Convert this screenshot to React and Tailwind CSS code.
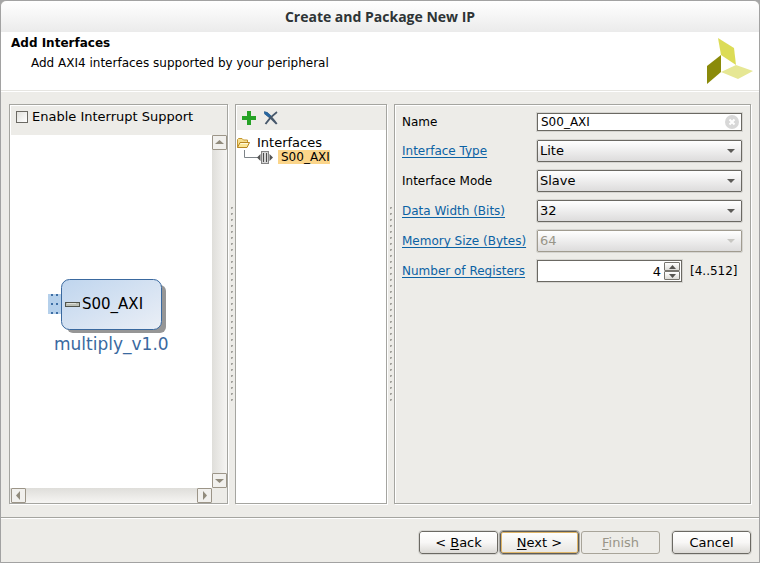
import React from 'react';

const etched = 'border border-[#a5a5a0] shadow-[1px_1px_0_#fff,inset_1px_1px_0_#fff]';

function Splitter() {
  return (
    <div role="separator" className="flex w-[7px] items-center justify-center pl-0.5" aria-orientation="vertical">
      <svg width="3" height="194" aria-hidden="true" shapeRendering="crispEdges">
        <defs>
          <pattern id="grip" width="3" height="6" patternUnits="userSpaceOnUse">
            <rect width="2" height="1" fill="#a3a29d" />
            <rect y="1" width="1" height="1" fill="#a3a29d" />
            <rect x="1" y="1" width="1" height="1" fill="#d0cfca" />
          </pattern>
        </defs>
        <rect width="3" height="194" fill="url(#grip)" />
      </svg>
    </div>
  );
}

function ScrollButton({ label, points }) {
  return (
    <button type="button" aria-label={label} className="flex h-[15px] w-[15px] shrink-0 items-center justify-center rounded-[1px] border border-[#9c9588] bg-[#f1f0ed]">
      <svg width="9" height="9" viewBox="0 0 9 9" aria-hidden="true">
        <polygon points={points} fill="#918b7c" />
      </svg>
    </button>
  );
}

function IpBlock() {
  return (
    <svg width="122" height="82" viewBox="0 0 122 82" role="img" aria-label="multiply_v1.0 block">
      <defs>
        <linearGradient id="block" x1="0" y1="0" x2="1" y2="1">
          <stop offset="0" stopColor="#bfd5ee" />
          <stop offset="1" stopColor="#ebeff6" />
        </linearGradient>
      </defs>
      <rect x="19" y="6" width="99" height="48" rx="6" fill="#969696" />
      <rect x="0" y="15" width="14" height="20" fill="#b5d0eb" />
      <path d="M3 15h2v2h-2zM8 15h2v2h-2zM3 24h2v2h-2zM8 24h2v2h-2zM3 33h2v2h-2zM8 33h2v2h-2z" fill="#3e6fa5" />
      <rect x="13.5" y="0.5" width="100" height="50" rx="8" fill="url(#block)" stroke="#3a699f" />
      <rect x="17.5" y="23.5" width="14" height="4" fill="#bdc0b6" stroke="#51544b" />
      <path d="M19 24.5h9" stroke="#dfe1da" />
      <text x="34" y="30" fontSize="15" fill="#000" className="font-['DejaVu_Sans',sans-serif]">S00_AXI</text>
      <text x="6" y="71" fontSize="17" fill="#3a699f" className="font-['DejaVu_Sans',sans-serif]">multiply_v1.0</text>
    </svg>
  );
}

function BlockPanel() {
  return (
    <section className={`flex w-[219px] shrink-0 flex-col ${etched}`}>
      <label className="flex h-[30px] items-center gap-1 pb-1.5 pl-1.5">
        <input type="checkbox" className="h-3 w-3 appearance-none border border-[#6b6963] bg-linear-to-br from-[#e2e1dd] to-white" />
        Enable Interrupt Support
      </label>
      <div className="grid flex-1 grid-cols-[1fr_15px] grid-rows-[1fr_15px]">
        <div className="flex items-center justify-center bg-white pr-1 pt-4">
          <IpBlock />
        </div>
        <div className="flex flex-col justify-between bg-linear-to-r from-[#dfdeda] to-[#f6f5f3]">
          <ScrollButton label="Scroll up" points="0,6 4.5,2 9,6" />
          <ScrollButton label="Scroll down" points="0,3 4.5,7 9,3" />
        </div>
        <div className="flex justify-between bg-linear-to-b from-[#dfdeda] to-[#f6f5f3] pl-px">
          <ScrollButton label="Scroll left" points="6,0 2,4.5 6,9" />
          <ScrollButton label="Scroll right" points="3,0 7,4.5 3,9" />
        </div>
      </div>
    </section>
  );
}

function TreePanel() {
  return (
    <section className={`flex w-[152px] shrink-0 flex-col bg-white ${etched}`}>
      <div className="ml-px mt-px flex h-6 items-center gap-2 bg-[#edece8] pl-[5px]">
        <button type="button" aria-label="Add interface">
          <svg width="14" height="14" viewBox="0 0 14 14" className="block" aria-hidden="true">
            <path d="M5 0h4v5h5v4h-5v5h-4v-5h-5v-4h5z" fill="#26a226" />
          </svg>
        </button>
        <button type="button" aria-label="Remove interface">
          <svg width="14" height="14" viewBox="0 0 14 14" className="block" aria-hidden="true">
            <path d="M0 0.5L3 1Q8 5 13.5 12.5L12 13.5Q7 8 0.5 3Z" fill="#47586b" />
            <path d="M0 0.5L3 1L7 4.5L5 6.5L0.5 3Z" fill="#2766a0" />
            <path d="M13 1Q6 6 1.5 13" fill="none" stroke="#47586b" strokeWidth="1.8" />
          </svg>
        </button>
      </div>
      <ul className="pl-px pt-1.5 leading-[14px]">
        <li>
          <div className="flex h-[14px] items-center gap-[7px]">
            <svg width="13" height="12" viewBox="0 0 13 12" aria-hidden="true">
              <path d="M0.5 10.5V2.5L1.5 1.5H5L6.5 3H10.5V5.5" fill="#f6df90" stroke="#c59730" />
              <path d="M0.5 10.5L3 5.5H12.5L10 10.5Z" fill="#fbe696" stroke="#b98722" />
              <path d="M3.5 6.5H11" stroke="#fffbe0" />
            </svg>
            Interfaces
          </div>
          <ul>
            <li className="flex h-[14px] items-center pl-[7px]">
              <svg width="30" height="14" viewBox="0 0 30 14" aria-hidden="true">
                <path d="M0.5 0V7.5H14" fill="none" stroke="#7d8388" />
                <path d="M13 7.5L16.5 4V11ZM29 7.5L25.5 4V11Z" fill="#555" />
                <rect x="17.5" y="1.5" width="7" height="12" fill="#d5d5d5" stroke="#858585" />
                <path d="M19.5 3V12M22.5 3V12" stroke="#4c4c4c" />
              </svg>
              <span className="ml-1 bg-[#fbd58a] pl-[3px] text-xs leading-[14px]">S00_AXI</span>
            </li>
          </ul>
        </li>
      </ul>
    </section>
  );
}

const field = 'w-full border border-[#6b6963] text-black outline outline-[#d6d5d1]';

function SelectField({ id, value, disabled }) {
  return (
    <div className="relative">
      <select
        id={id}
        defaultValue={value}
        disabled={disabled}
        className={`block h-[22px] appearance-none rounded-[1px] bg-linear-to-b from-white to-[#dddcdc] pl-0.5 text-[13px] ${field} disabled:border-[#a19c90] disabled:text-[#999588] disabled:opacity-100`}
      >
        <option>{value}</option>
      </select>
      <svg width="8" height="4" viewBox="0 0 8 4" aria-hidden="true" className={`pointer-events-none absolute right-[7px] top-[9px] ${disabled ? 'text-[#c8c7c3]' : 'text-[#5c5b58]'}`}>
        <polygon points="0,0 8,0 4,4" fill="currentColor" />
      </svg>
    </div>
  );
}

function FieldLabel({ htmlFor, linked, children }) {
  return (
    <label htmlFor={htmlFor} className="whitespace-nowrap">
      {linked ? <a href="#help" className="text-[#0b62a4] underline underline-offset-2">{children}</a> : children}
    </label>
  );
}

function SpinButton({ label, points }) {
  return (
    <button type="button" aria-label={label} className="flex h-[9px] w-4 items-center justify-center rounded-[1px] border border-[#77756f] bg-linear-to-b from-white to-[#dddcd8]">
      <svg width="7" height="4" viewBox="0 0 7 4" aria-hidden="true">
        <polygon points={points} fill="#555450" />
      </svg>
    </button>
  );
}

function FormPanel() {
  return (
    <section className={`min-w-0 flex-1 pl-[7px] pr-2 pt-[3px] ${etched}`}>
      <form className="grid auto-rows-[30px] grid-cols-[135px_1fr] grid-rows-[28px] items-center text-xs">
        <FieldLabel htmlFor="name">Name</FieldLabel>
        <div className="relative">
          <input id="name" type="text" defaultValue="S00_AXI" className={`block h-[18px] bg-white pl-[3px] ${field}`} />
          <button type="button" aria-label="Clear name" className="absolute right-[3px] top-0.5">
            <svg width="14" height="14" viewBox="0 0 14 14" className="block" aria-hidden="true">
              <circle cx="7" cy="7" r="7" fill="#d8d8d8" />
              <path d="M4.5 4.5L9.5 9.5M9.5 4.5L4.5 9.5" stroke="#fff" strokeWidth="2" />
            </svg>
          </button>
        </div>
        <FieldLabel htmlFor="type" linked>Interface Type</FieldLabel>
        <SelectField id="type" value="Lite" />
        <FieldLabel htmlFor="mode">Interface Mode</FieldLabel>
        <SelectField id="mode" value="Slave" />
        <FieldLabel htmlFor="width" linked>Data Width (Bits)</FieldLabel>
        <SelectField id="width" value="32" />
        <FieldLabel htmlFor="memory" linked>Memory Size (Bytes)</FieldLabel>
        <SelectField id="memory" value="64" disabled />
        <FieldLabel htmlFor="registers" linked>Number of Registers</FieldLabel>
        <div className="flex items-center gap-2">
          <div className="relative w-[145px]">
            <input id="registers" type="text" inputMode="numeric" defaultValue="4" className={`block h-[22px] bg-white pr-5 text-right text-[13px] ${field}`} />
            <div className="absolute right-0.5 top-0.5 flex flex-col">
              <SpinButton label="Increase" points="0,4 3.5,0 7,4" />
              <SpinButton label="Decrease" points="0,0 3.5,4 7,0" />
            </div>
          </div>
          <span>[4..512]</span>
        </div>
      </form>
    </section>
  );
}

const button = 'h-[23px] w-[79px] rounded-[3px] border';
const raised = 'border-[#6b6963] bg-linear-to-b from-white via-[#f8f7f6] to-[#dcdad6] outline outline-[#d6d5d1]';

export default function App() {
  return (
    <div className="min-h-screen bg-[#a5a5a5]">
      <div className="flex min-h-screen flex-col rounded-t-md border border-[#a2a2a2] bg-[#edece8] font-['DejaVu_Sans',sans-serif] text-[13px] leading-4 text-black">
        <header className="flex h-[31px] items-center justify-center rounded-t-md bg-linear-to-b from-white to-[#ebebeb]">
          <h1 className="font-['Open_Sans','Noto_Sans',sans-serif] text-[14px] font-bold text-[#2e3436]">Create and Package New IP</h1>
        </header>
        <div className="flex h-[59px] justify-between border-b border-[#e6e5e1] bg-white">
          <div className="pl-2.5 pt-[3px] text-xs">
            <h2 className="font-bold">Add Interfaces</h2>
            <p className="pl-5 pt-1">Add AXI4 interfaces supported by your peripheral</p>
          </div>
          <svg width="47" height="47" viewBox="0 0 47 47" className="mr-[5px] mt-1.5" role="img" aria-label="Logo">
            <polygon points="11,0 27,10 29,27 14,17" fill="#dcdc56" />
            <polygon points="0,28 14,17 14,34 0,46" fill="#8a8a0a" />
            <polygon points="14,34 29,27 46,33 31,41" fill="#e6e794" />
          </svg>
        </div>
        <main className="flex flex-1 border-t border-white px-2 pb-[13px] pt-3">
          <BlockPanel />
          <Splitter />
          <TreePanel />
          <Splitter />
          <FormPanel />
        </main>
        <footer className="flex h-[45px] items-start justify-end border-t border-[#a5a5a0] pr-2 pt-[13px] shadow-[inset_0_1px_0_#fff]">
          <div className="flex gap-0.5">
            <button type="button" className={`${button} ${raised}`}>&lt; <u className="underline-offset-2">B</u>ack</button>
            <button type="button" className={`${button} border-[#5f5d58] bg-linear-to-b from-white to-[#e8e6e2] shadow-[inset_0_0_0_1px_#dfb567] outline outline-[#aaa9a4]`}><u className="underline-offset-2">N</u>ext &gt;</button>
            <button type="button" disabled className={`${button} border-[#a8a499] text-[#999588]`}><u className="underline-offset-2">F</u>inish</button>
          </div>
          <button type="button" className={`ml-3 ${button} ${raised}`}>Cancel</button>
        </footer>
      </div>
    </div>
  );
}
